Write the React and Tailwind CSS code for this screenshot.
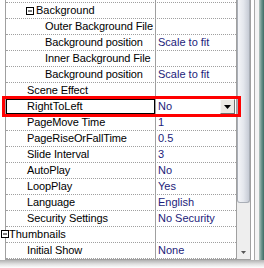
import React from "react";

const rows = [
  { name: "Background", cat: "inner" },
  { name: "Outer Background File", pad: "pl-[39px]" },
  { name: "Background position", pad: "pl-[39px]", value: "Scale to fit" },
  { name: "Inner Background File", pad: "pl-[39px]" },
  { name: "Background position", pad: "pl-[39px]", value: "Scale to fit" },
  { name: "Scene Effect", pad: "pl-[21px]" },
  { name: "RightToLeft", value: "No", edit: true },
  { name: "PageMove Time", pad: "pl-[21px]", value: "1" },
  { name: "PageRiseOrFallTime", pad: "pl-[21px]", value: "0.5" },
  { name: "Slide Interval", pad: "pl-[21px]", value: "3" },
  { name: "AutoPlay", pad: "pl-[21px]", value: "No" },
  { name: "LoopPlay", pad: "pl-[21px]", value: "Yes" },
  { name: "Language", pad: "pl-[21px]", value: "English" },
  { name: "Security Settings", pad: "pl-[21px]", value: "No Security" },
  { name: "Thumbnails", cat: "root" },
  { name: "Initial Show", pad: "pl-[21px]", value: "None" },
];

function MinusBox() {
  return (
    <svg width="8" height="8" viewBox="0 0 8 8" className="shrink-0 bg-white">
      <rect x="0.5" y="0.5" width="7" height="7" fill="white" stroke="#000" />
      <line x1="2" y1="4" x2="6" y2="4" stroke="#000" />
    </svg>
  );
}

function Row({ row }) {
  return (
    <div className="flex h-[16px] border-b border-dotted border-[#a0a0a0]">
      {/* name cell */}
      {row.cat === "inner" ? (
        <div className="w-[149px] shrink-0 flex items-center pl-[20px] gap-[2px] text-black whitespace-nowrap overflow-hidden">
          <MinusBox />
          <span>{row.name}</span>
        </div>
      ) : row.cat === "root" ? (
        <div className="relative w-[149px] shrink-0 flex items-center pl-[3px] text-black whitespace-nowrap">
          <div className="absolute left-[-5px] top-[3px]">
            <MinusBox />
          </div>
          <span>{row.name}</span>
        </div>
      ) : row.edit ? (
        <div className="w-[149px] shrink-0 flex items-center border border-black pl-[20px] text-black whitespace-nowrap overflow-hidden">
          <span>{row.name}</span>
        </div>
      ) : (
        <div className={`w-[149px] shrink-0 flex items-center ${row.pad} text-black whitespace-nowrap overflow-hidden tracking-[-0.1px]`}>
          <span>{row.name}</span>
        </div>
      )}
      {/* value cell */}
      <div className="w-[81px] shrink-0 flex items-center border-l border-[#a0a0a0] pl-[2px] text-[#1c1c7a] whitespace-nowrap overflow-hidden">
        <span className="flex-1">{row.value}</span>
        {row.edit && (
          <div className="w-[15px] h-[15px] mr-[1px] flex items-center justify-center bg-[#ece9e4] border border-t-[#f8f8f8] border-l-[#f8f8f8] border-r-[#707070] border-b-[#707070]">
            <svg width="7" height="4" viewBox="0 0 7 4">
              <polygon points="0,0 7,0 3.5,4" fill="#000" />
            </svg>
          </div>
        )}
      </div>
    </div>
  );
}

export default function App() {
  return (
    <div
      className="relative w-[264px] h-[268px] bg-white overflow-hidden text-[11px] leading-[15px]"
      style={{ fontFamily: '"Liberation Sans", Arial, sans-serif' }}
    >
      <div className="flex h-[260px]">
        {/* grid */}
        <div className="pl-[5px] w-[237px]">
          <div className="border-l border-r border-b border-[#a0a0a0] h-[260px]">
            <div className="flex h-[3px] border-b border-dotted border-[#a0a0a0]">
              <div className="w-[149px]" />
              <div className="w-[81px] border-l border-[#a0a0a0]" />
            </div>
            {rows.map((r, i) => (
              <Row key={i} row={r} />
            ))}
          </div>
        </div>
        {/* scrollbar */}
        <div className="w-[13px] flex flex-col bg-[#eeeeee] border-b border-[#a0a0a0]">
          <div className="h-[203px] rounded-b-[3px] border-x border-b border-[#a9aeb6] bg-gradient-to-r from-[#f4f5f8] via-[#e4e7ed] to-[#c6cbd5]" />
          <div className="flex-1" />
          <div className="h-[14px] flex items-center justify-center">
            <svg width="5" height="3" viewBox="0 0 5 3">
              <polygon points="0,0 5,0 2.5,3" fill="#555" />
            </svg>
          </div>
        </div>
        {/* frame edges */}
        <div className="w-px bg-[#a0a0a0]" />
        <div className="w-[3px] bg-white" />
        <div className="w-px bg-[#a8a8a8]" />
        <div className="w-[4px] bg-[#f4f4f4]" />
        <div className="w-[5px] bg-gradient-to-r from-[#b7c6c2] via-[#6f958e] to-[#3e6b64]" />
      </div>
      {/* bottom shadow */}
      <div className="h-[8px] bg-gradient-to-b from-[#b0b0b0] via-[#e0e0e0] to-white" />

      {/* red highlight */}
      <div className="absolute left-[2px] top-[96px] w-[239px] h-[21px] border-[3px] border-[#ff0000]" />
    </div>
  );
}
